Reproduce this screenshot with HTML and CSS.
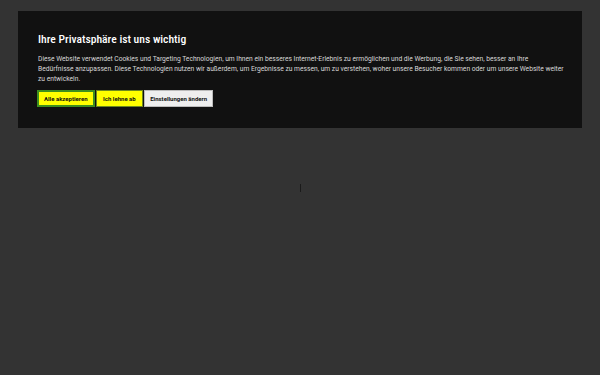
FILE: index.html
```html
<!DOCTYPE html>
<html lang="de">
<head>
  <meta charset="UTF-8">
  <meta name="viewport" content="width=device-width, initial-scale=1.0">
  <title>Datenschutz</title>
  <link rel="stylesheet" href="styles.css">
</head>
<body>
  <div class="cookie-banner">
    <h2 class="cookie-title">Ihre Privatsphäre ist uns wichtig</h2>
    <p class="cookie-text">Diese Website verwendet Cookies und Targeting Technologien, um Ihnen ein besseres Internet-Erlebnis zu ermöglichen und die Werbung, die Sie sehen, besser an Ihre<br>Bedürfnisse anzupassen. Diese Technologien nutzen wir außerdem, um Ergebnisse zu messen, um zu verstehen, woher unsere Besucher kommen oder um unsere Website weiter zu entwickeln.</p>
    <div class="cookie-buttons">
      <button class="btn btn-accept">Alle akzeptieren</button>
      <button class="btn btn-reject">Ich lehne ab</button>
      <button class="btn btn-settings">Einstellungen ändern</button>
    </div>
  </div>
  <div class="page-content">
    <span class="caret"></span>
  </div>
</body>
</html>
```

FILE: styles.css
```css
body {
  background-color: #333333;
  margin: 0;
  font-family: Roboto, "Liberation Sans", sans-serif;
  height: 100vh;
  overflow: hidden;
  display: flex;
  flex-direction: column;
}
.cookie-banner {
  background-color: #111111;
  margin: 11px 18px 0 18px;
  padding: 20px 14px 20px 20px;
  height: 117px;
  box-sizing: border-box;
}
.cookie-title {
  color: #ffffff;
  font-size: 11.6px;
  font-weight: 500;
  font-stretch: 75%;
  margin: 0 0 7px 0;
  line-height: 16px;
}
.cookie-text {
  color: #d8d8d8;
  font-size: 6.7px;
  line-height: 10px;
  margin: 0 0 6px 0;
}
.cookie-buttons {
  display: flex;
  gap: 1px;
}
.btn {
  font-family: inherit;
  font-size: 6px;
  font-weight: 700;
  color: #111111;
  height: 17px;
  padding: 0 5px;
  border: 1px solid #cccccc;
  cursor: pointer;
}
.btn-accept {
  background-color: #ffff00;
  border: 2px solid #3d8f1f;
  margin-left: -1px;
}
.btn-reject {
  background-color: #ffff00;
  border-color: #6d8a1e;
  padding: 0 6.5px;
}
.btn-settings {
  background-color: #eeeeee;
  border-color: #bbbbbb;
}
.page-content {
  flex: 1;
  display: flex;
  justify-content: center;
  padding-top: 56px;
}
.caret {
  display: block;
  width: 1px;
  height: 8px;
  background-color: #1a1a1a;
}
```
